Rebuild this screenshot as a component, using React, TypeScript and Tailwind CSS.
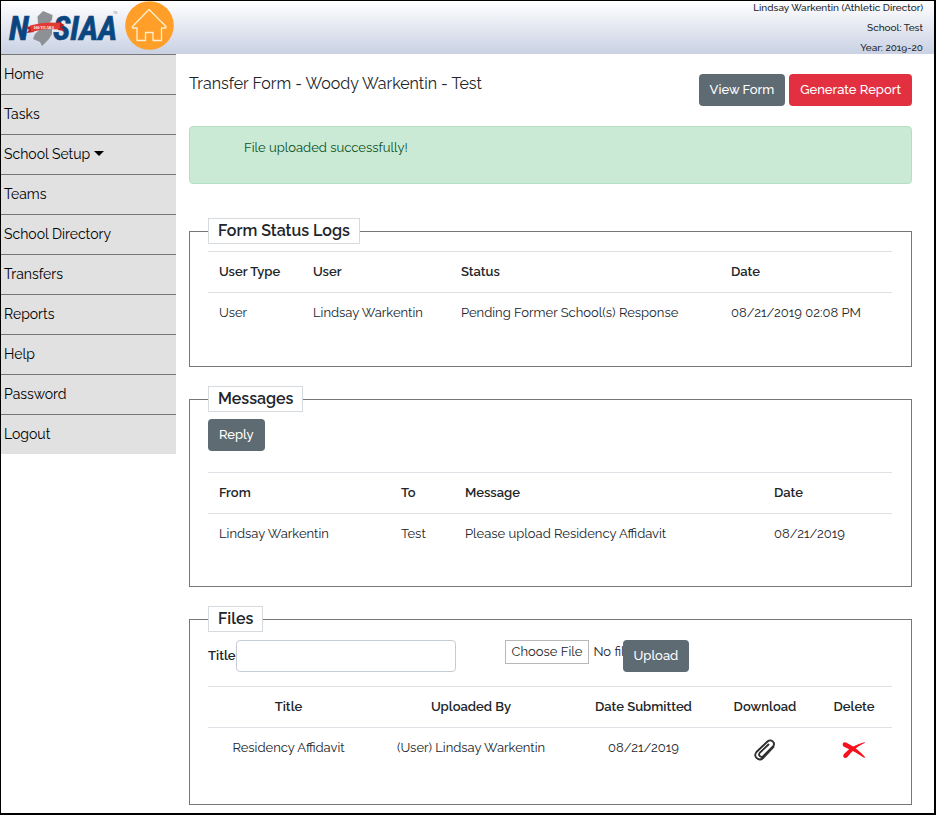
import { ReactNode } from 'react';

const navItems = [
  { label: 'Home' },
  { label: 'Tasks' },
  { label: 'School Setup', hasMenu: true },
  { label: 'Teams' },
  { label: 'School Directory' },
  { label: 'Transfers' },
  { label: 'Reports' },
  { label: 'Help' },
  { label: 'Password' },
  { label: 'Logout' },
];

function Logo() {
  return (
    <svg width="110" height="40" viewBox="0 0 110 40" role="img" aria-label="NJSIAA">
      <g fill="#0b4680" stroke="#0b4680" strokeWidth="0.6" fontSize="33" fontWeight="700" fontStyle="italic" fontFamily="'Roboto Condensed', Roboto, sans-serif">
        <text x="1" y="31.500">N</text>
        <text x="45" y="31.500">SIAA</text>
      </g>
      <path d="M35 3 L44.500 7 L44 12 L41 15 L44 16 L44 26 L41 31 L34 38 L32 34 L25 31 L27 26 L33 20 L30 15 L29.500 8.500 Z" fill="#8d9196" />
      <path d="M24 18 L18 19 L21 22 L18.500 25 L26 24 Z M50 13 L56.500 17 L53.500 19 L57 23 L50 22 Z" fill="#b81f24" />
      <path d="M22 17.500 Q37 13 52 15 L51.500 21.500 Q37 19.500 23.500 24 Z" fill="#e23b36" />
      <text x="25.500" y="20.500" fill="#fff" fontSize="4" fontWeight="700" fontFamily="'Liberation Serif', serif">100 YEARS</text>
      <text x="105" y="6" fill="#8d9196" fontSize="3" fontFamily="'Liberation Sans', sans-serif">TM</text>
    </svg>
  );
}

function HomeIcon() {
  return (
    <svg width="49" height="49" viewBox="0 0 49 49" aria-hidden="true">
      <circle cx="24.5" cy="24.5" r="24.3" fill="#ff9f2a" />
      <path
        d="M24 8.500 L41 25.500 Q41.500 27 40 27 L36.500 27 L36.500 39.500 L28 39.500 L28 31.500 L20.500 31.500 L20.500 39.500 L12 39.500 L12 27 L8 27 Q6.500 27 7.500 25.500 Z"
        fill="none"
        stroke="#fff0cf"
        strokeWidth="1.3"
        strokeLinejoin="round"
      />
    </svg>
  );
}

function ClipIcon() {
  const d = 'M20.500 9 L10 20 C6 24 -0.500 18.500 3.500 14 L14.500 3.500 C18 0.500 23 4.500 20 8.500 L10.500 18 C8 20 4.500 17.500 7 14.500 L15.500 6.500';
  return (
    <svg width="24" height="24" viewBox="0 0 24 24" fill="none" strokeLinecap="round" aria-hidden="true">
      <path d={d} stroke="#1a1a1a" strokeWidth="1.8" />
      <path d={d} stroke="#888" strokeWidth="0.3" />
    </svg>
  );
}

function DeleteIcon() {
  return (
    <svg width="24" height="18" viewBox="0 0 24 18" fill="#f5121d" aria-hidden="true">
      <path d="M1 2 Q3 0.500 5 2 Q15 7 23 16 L22.500 17 Q12 10 1.500 5.500 Q0 3.500 1 2 Z" />
      <path d="M23 1 L22.500 2 Q12 7 5.500 16 Q3 18 1.500 16 Q0.500 15 2 13 Q10 4 23 1 Z" />
    </svg>
  );
}

function Panel({ title, children }: { title: string; children: ReactNode }) {
  return (
    <fieldset className="min-w-0 border border-[#777] pr-[19px] pl-[18px]">
      <legend className="border border-[#d5dade] bg-white px-[9px] text-base leading-6 font-semibold">{title}</legend>
      {children}
    </fieldset>
  );
}

const th = 'border-y border-[#dee2e6] px-[11px] py-[10px] font-semibold whitespace-nowrap';
const td = 'px-[11px] py-[10px] whitespace-nowrap';
const btn = 'rounded bg-[#5f6b72] px-[11px] leading-8 font-medium text-white hover:bg-[#4e585e]';

export default function App() {
  return (
    <div className="min-h-screen border-t border-r-2 border-b-2 border-l border-black bg-white font-[Raleway,Lato,sans-serif] text-[13px] leading-5 text-[#212529] [font-variant-numeric:oldstyle-nums]">
      <header className="flex items-start justify-between bg-linear-to-b from-white to-[#c9d1e3] pr-[11px]">
        <div className="flex items-start gap-[7px] pl-[7px]">
          <a href="#" className="pt-[7px]"><Logo /></a>
          <a href="#" aria-label="Home"><HomeIcon /></a>
        </div>
        <div className="-mt-[3px] -mb-1 text-right text-[10px] leading-5 font-medium">
          <p>Lindsay Warkentin (Athletic Director)</p>
          <p>School: Test</p>
          <p>Year: 2019-20</p>
        </div>
      </header>

      <div className="flex items-start">
        <nav className="w-[175px] shrink-0 bg-[#e1e1e1] text-sm text-black">
          {navItems.map(({ label, hasMenu }) => (
            <a key={label} href="#" className="flex h-10 items-center gap-1 border-t border-[#777] pb-[2px] pl-[3px]">
              {label}
              {hasMenu && <span className="border-x-5 border-t-5 border-x-transparent border-t-black" />}
            </a>
          ))}
        </nav>

        <main className="min-w-0 flex-1 pt-5 pr-[22px] pb-2 pl-[13px]">
          <div className="flex items-start justify-between">
            <h1 className="text-base leading-5">Transfer Form - Woody Warkentin - Test</h1>
            <div className="flex gap-1">
              <button type="button" className={btn}>View Form</button>
              <button type="button" className="rounded bg-[#e33041] px-[11px] leading-8 font-medium text-white hover:bg-[#c82333]">Generate Report</button>
            </div>
          </div>

          <div role="alert" className="mt-5 rounded border border-[#b5dfc3] bg-[#cbead6] px-[54px] pt-[11px] pb-[25px] text-[#0b5124]">
            File uploaded successfully!
          </div>

          <div className="mt-[34px] space-y-[19px]">
            <Panel title="Form Status Logs">
              <table className="mt-[7px] mb-[33px] w-full table-fixed border-collapse text-left">
                <thead>
                  <tr>
                    <th className={`${th} w-[94px]`}>User Type</th>
                    <th className={`${th} w-[148px]`}>User</th>
                    <th className={th}>Status</th>
                    <th className={`${th} w-[172px]`}>Date</th>
                  </tr>
                </thead>
                <tbody>
                  <tr>
                    <td className={td}>User</td>
                    <td className={td}>Lindsay Warkentin</td>
                    <td className={td}>Pending Former School(s) Response</td>
                    <td className={td}>08/21/2019 02:08 PM</td>
                  </tr>
                </tbody>
              </table>
            </Panel>

            <Panel title="Messages">
              <button type="button" className={`${btn} mt-[7px]`}>Reply</button>
              <table className="mt-[21px] mb-8 w-full table-fixed border-collapse text-left">
                <thead>
                  <tr>
                    <th className={`${th} w-[182px]`}>From</th>
                    <th className={`${th} w-[64px]`}>To</th>
                    <th className={th}>Message</th>
                    <th className={`${th} w-[129px]`}>Date</th>
                  </tr>
                </thead>
                <tbody>
                  <tr>
                    <td className={td}>Lindsay Warkentin</td>
                    <td className={td}>Test</td>
                    <td className={td}>Please upload Residency Affidavit</td>
                    <td className={td}>08/21/2019</td>
                  </tr>
                </tbody>
              </table>
            </Panel>

            <Panel title="Files">
              <form className="mt-2 flex items-start" onSubmit={e => e.preventDefault()}>
                <label htmlFor="title" className="leading-8 font-semibold">Title</label>
                <input id="title" type="text" className="h-8 w-[220px] rounded border border-[#c5ccd3] px-3 outline-none focus:border-blue-400" />
                <div className="ml-[49px] w-[118px] overflow-hidden">
                  <input
                    type="file"
                    aria-label="Choose File"
                    className="w-56 file:mr-1 file:h-6 file:border file:border-solid file:border-[#b8b8b8] file:bg-white file:px-[6px] file:leading-5"
                  />
                </div>
                <button type="submit" className={btn}>Upload</button>
              </form>
              <table className="mt-[14px] mb-9 w-full table-fixed border-collapse text-center">
                <thead>
                  <tr>
                    <th className={`${th} w-[161px]`}>Title</th>
                    <th className={th}>Uploaded By</th>
                    <th className={`${th} w-[141px]`}>Date Submitted</th>
                    <th className={`${th} w-[102px]`}>Download</th>
                    <th className={`${th} w-[76px]`}>Delete</th>
                  </tr>
                </thead>
                <tbody>
                  <tr>
                    <td className={td}>Residency Affidavit</td>
                    <td className={td}>(User) Lindsay Warkentin</td>
                    <td className={td}>08/21/2019</td>
                    <td className="pt-1"><a href="#" aria-label="Download" className="flex justify-center"><ClipIcon /></a></td>
                    <td className="pt-1"><button type="button" aria-label="Delete" className="block w-full"><span className="flex justify-center"><DeleteIcon /></span></button></td>
                  </tr>
                </tbody>
              </table>
            </Panel>
          </div>
        </main>
      </div>
    </div>
  );
}
